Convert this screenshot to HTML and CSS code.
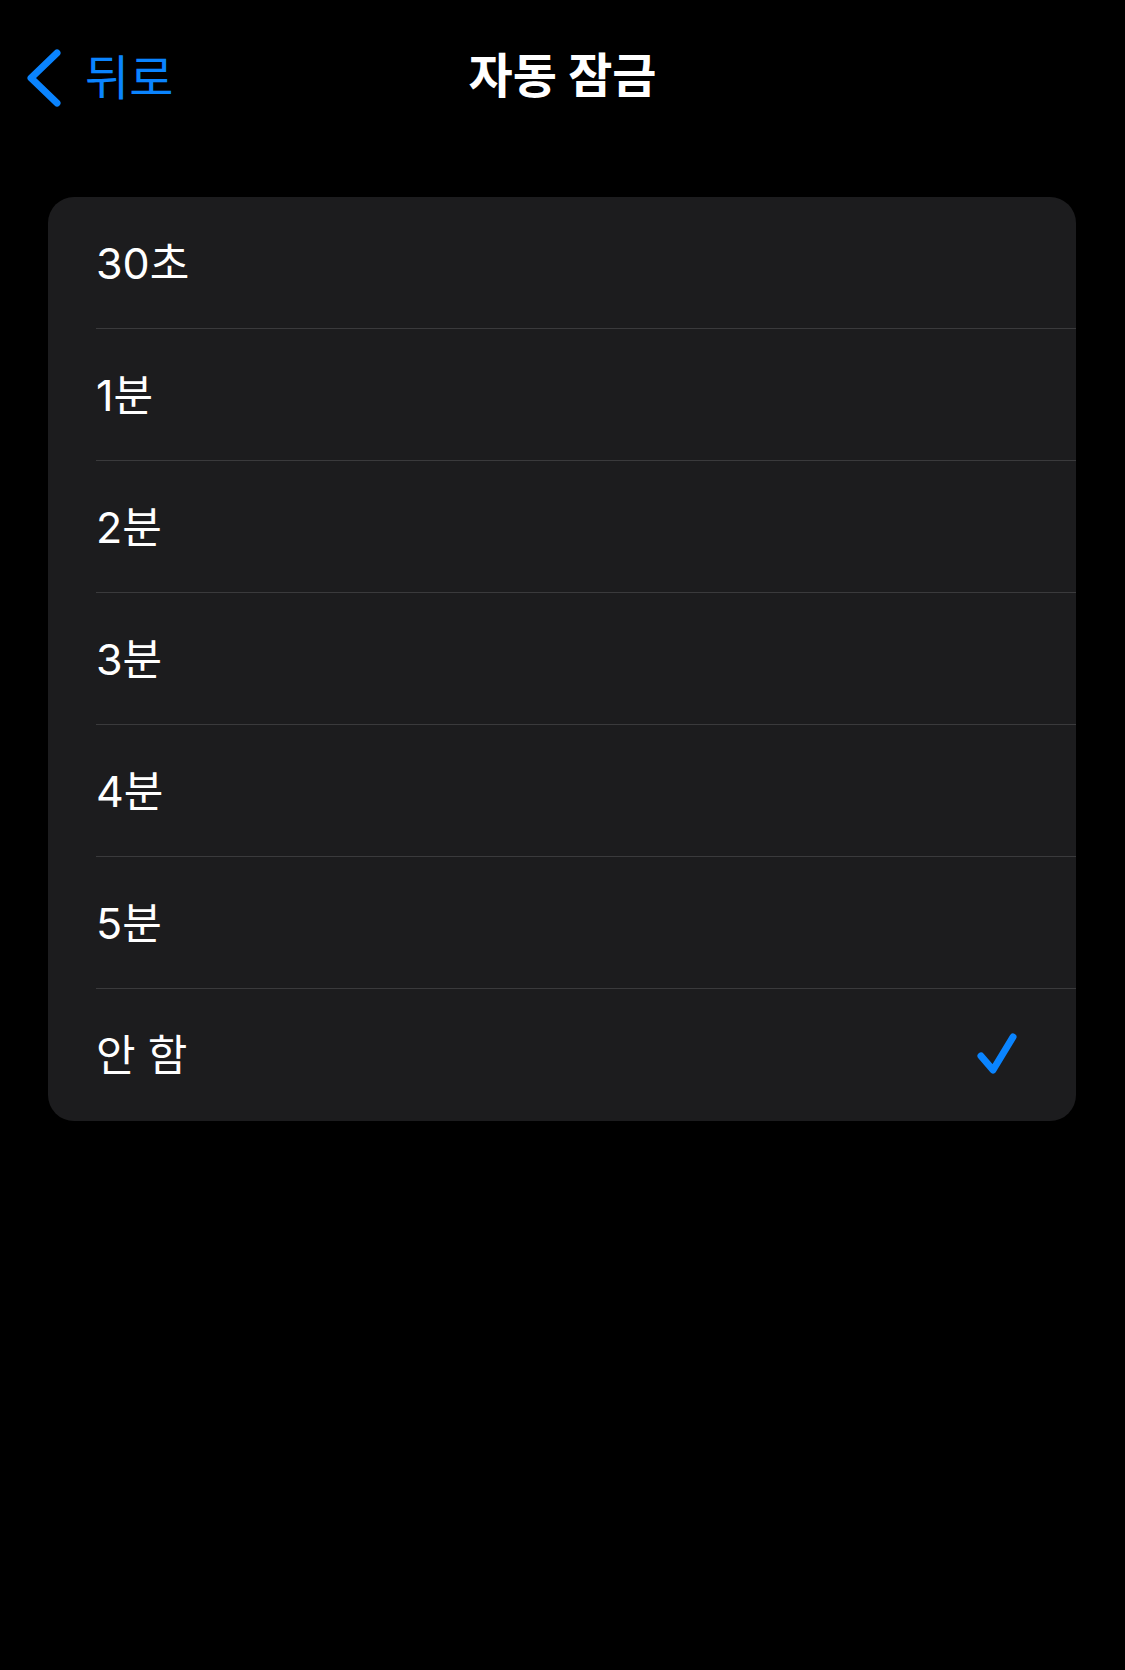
FILE: index.html
```html
<!DOCTYPE html>
<html lang="ko">
<head>
  <meta charset="UTF-8">
  <meta name="viewport" content="width=device-width, initial-scale=1.0">
  <title>자동 잠금</title>
  <link rel="stylesheet" href="styles.css">
</head>
<body>
  <header class="nav">
    <a class="back" href="#">
      <svg class="chevron" width="40" height="60" viewBox="0 0 40 60">
        <path d="M33 5 L7 30 L33 55" fill="none" stroke="#0a84ff" stroke-width="7" stroke-linecap="round" stroke-linejoin="round"/>
      </svg>
      <span>뒤로</span>
    </a>
    <h1 class="title">자동 잠금</h1>
    <div></div>
  </header>

  <ul class="options">
    <li class="option">30초</li>
    <li class="option">1분</li>
    <li class="option">2분</li>
    <li class="option">3분</li>
    <li class="option">4분</li>
    <li class="option">5분</li>
    <li class="option selected">
      <span>안 함</span>
      <svg class="check" width="44" height="44" viewBox="0 0 44 44">
        <path d="M5 24 L17 38 L37 5" fill="none" stroke="#0a84ff" stroke-width="7" stroke-linecap="round" stroke-linejoin="round"/>
      </svg>
    </li>
  </ul>
</body>
</html>
```

FILE: styles.css
```css
body {
  margin: 0;
  background: #000;
  color: #fff;
  font-family: Inter, "Noto Sans CJK KR", sans-serif;
}
.nav {
  display: grid;
  grid-template-columns: 1fr auto 1fr;
  align-items: center;
  height: 156px;
  padding: 0 24px;
  box-sizing: border-box;
}
.back {
  display: flex;
  align-items: center;
  gap: 21px;
  color: #0a84ff;
  text-decoration: none;
  font-size: 48px;
  line-height: 60px;
}
.chevron {
  display: block;
}
.title {
  margin: 0 0 4px;
  font-size: 48px;
  font-weight: 700;
  line-height: 60px;
}
.options {
  list-style: none;
  margin: 41px 49px 0 48px;
  padding: 0;
  background: #1c1c1e;
  border-radius: 26px;
  overflow: hidden;
}
.option {
  display: flex;
  align-items: center;
  justify-content: space-between;
  height: 132px;
  margin-left: 48px;
  padding: 0 56px 6px 0;
  box-sizing: border-box;
  border-bottom: 1px solid #3a3a3c;
  font-size: 43px;
}
.option:last-child {
  border-bottom: none;
}
.check {
  display: block;
  margin-top: 4px;
}
```
